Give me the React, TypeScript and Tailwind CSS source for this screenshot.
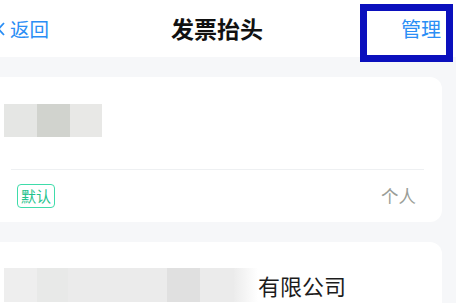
import React from "react";

const FONT = { fontFamily: '"Noto Sans CJK SC", "Noto Sans", sans-serif' };

function Blur({ cells }: { cells: { w: number; c: string }[] }) {
  return (
    <div className="flex">
      {cells.map((cell, i) => (
        <div key={i} className="h-full" style={{ width: cell.w, background: cell.c }} />
      ))}
    </div>
  );
}

export default function App() {
  return (
    <div className="relative h-[303px] w-[456px] overflow-hidden bg-[#f6f7f9]" style={FONT}>
      <header className="flex h-[57px] items-center bg-white">
        <div className="flex w-[171px] items-center gap-[5px] text-[#2a8ef5]">
          <svg width="8" height="14" viewBox="0 0 8 14" className="-ml-[3px]">
            <polyline points="7,1 1.5,7 7,13" fill="none" stroke="currentColor" strokeWidth="1.8" />
          </svg>
          <span className="text-[19.5px] leading-none">返回</span>
        </div>
        <h1 className="text-[23px] font-semibold leading-none text-[#111]">发票抬头</h1>
        <span className="ml-auto mr-[15px] text-[20px] leading-none text-[#2a8ef5]">管理</span>
      </header>

      <div className="absolute left-[360px] top-[4px] h-[58px] w-[93px] border-[7px] border-[#0b10bd]" />

      <div className="flex flex-col gap-[20px] pt-[20px] pr-[14px]">
        <section className="-ml-[12px] rounded-xl bg-white pl-[16px]">
          <div className="mt-[27px] flex h-[33px]">
            <Blur
              cells={[
                { w: 33, c: "#e5e6e4" },
                { w: 33, c: "#d1d3ce" },
                { w: 32, c: "#e8e8e6" },
              ]}
            />
          </div>
          <div className="mt-[32px] ml-[7px] mr-[18px] h-px bg-[#eef0f2]" />
          <div className="flex h-[52px] items-center justify-between pr-[26px]">
            <span className="ml-[13px] rounded-[4px] border border-[#3fdcaa] px-[3px] text-[15px] leading-[22px] text-[#1ec28c]">
              默认
            </span>
            <span className="text-[17.5px] leading-none text-[#9a9e98]">个人</span>
          </div>
        </section>

        <section className="-ml-[12px] h-[80px] rounded-xl bg-white pl-[16px]">
          <div className="mt-[26px] flex h-[34px] items-center">
            <div className="flex h-full">
              <Blur
                cells={[
                  { w: 33, c: "#eeeeee" },
                  { w: 31, c: "#e8e9e8" },
                  { w: 99, c: "#ebebeb" },
                  { w: 33, c: "#e0e0e0" },
                  { w: 34, c: "#ebebeb" },
                ]}
              />
              <div className="h-full w-[24px] bg-gradient-to-r from-[#ececec] to-white" />
            </div>
            <span className="text-[22px] leading-none text-[#1c1c1c]">有限公司</span>
          </div>
        </section>
      </div>
    </div>
  );
}
